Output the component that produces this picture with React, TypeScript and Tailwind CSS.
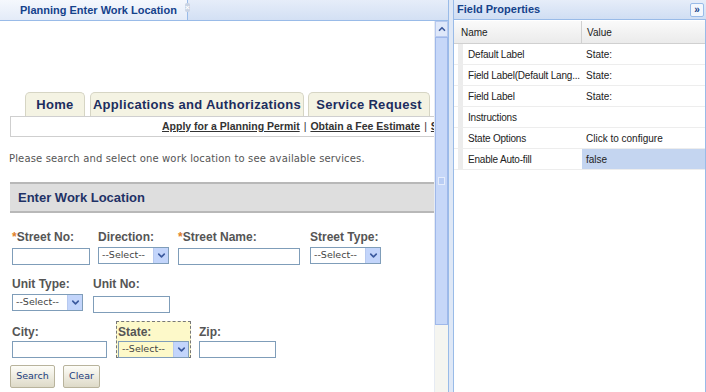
import { ChevronDown, ChevronUp } from 'lucide-react';

const label = 'text-[12px] font-bold text-[#555] leading-none';
const field = 'h-[17px] border border-[#7f9db9] bg-white';
const tab =
    'h-[24px] rounded-t-[5px] border border-b-0 border-[#d6d5c4] bg-[#f4f3e3] flex items-center justify-center text-[13px] font-bold text-[#1c2d5e] tracking-[0.3px] whitespace-nowrap';

function Select({ w, bg = 'bg-white' }: { w: string; bg?: string }) {
    return (
        <div className={`${w} h-[17px] border border-[#7f9db9] ${bg} flex items-center justify-between`}>
            <span className="pl-[3px] text-[9.5px] text-[#444] font-['DejaVu_Sans',sans-serif]">--Select--</span>
            <span className="w-[15px] h-[15px] bg-[#c3d5fb] border-l border-[#b7c9ef] flex items-center justify-center">
                <ChevronDown size={11} strokeWidth={3.5} className="text-[#3c5a9e]" />
            </span>
        </div>
    );
}

const props = [
    ['Default Label', 'State:'],
    ['Field Label(Default Lang...', 'State:'],
    ['Field Label', 'State:'],
    ['Instructions', ''],
    ['State Options', 'Click to configure'],
    ['Enable Auto-fill', 'false'],
];

export default function App() {
    return (
        <div className="w-[706px] h-[392px] flex overflow-hidden bg-white font-['Liberation_Sans',Arial,sans-serif]">
            {/* left pane */}
            <div className="w-[448px] flex flex-col shrink-0">
                <div className="h-[21px] flex bg-gradient-to-b from-[#e6edf9] to-[#d3e0f4] border-b border-[#99bbe8]">
                    <div className="w-[188px] h-[20px] flex items-center bg-gradient-to-b from-[#f5f8fd] to-[#e3ebf8] border-r border-[#99bbe8] whitespace-nowrap">
                        <span className="pl-[20px] text-[11px] font-bold text-[#15428b]">Planning Enter Work Location</span>
                        <span className="ml-[8px] mb-[6px] w-[9px] h-[9px] rounded-[2px] bg-[#c9d3e3] text-white text-[8px] leading-[9px] text-center font-bold">×</span>
                    </div>
                </div>
                <div className="flex flex-1 min-h-0">
                    <div className="w-[434px] flex flex-col overflow-hidden">
                        <div className="h-[71px] shrink-0" />
                        <div className="flex items-end h-[24px] pl-[25px] gap-[5px] shrink-0">
                            <div className={`${tab} w-[60px]`}>Home</div>
                            <div className={`${tab} w-[214px]`}>Applications and Authorizations</div>
                            <div className={`${tab} w-[122px] ml-[-1px]`}>Service Request</div>
                        </div>
                        <div className="ml-[10px] h-[21px] shrink-0 border border-r-0 border-[#cfcfcf] flex items-center overflow-hidden whitespace-nowrap pl-[151px] text-[10.5px] font-bold text-[#333]">
                            <span className="underline">Apply for a Planning Permit</span>
                            <span className="px-[4px] font-normal">|</span>
                            <span className="underline">Obtain a Fee Estimate</span>
                            <span className="px-[4px] font-normal">|</span>
                            <span className="underline">Schedule</span>
                        </div>
                        <div className="mt-[14px] pl-[9px] text-[10px] text-[#555] font-['DejaVu_Sans',sans-serif] tracking-[0.15px] whitespace-nowrap">
                            Please search and select one work location to see available services.
                        </div>
                        <div className="mt-[16px] ml-[10px] h-[31px] shrink-0 bg-[#dedede] border-t-2 border-b-2 border-[#b8b8b8] flex items-center pl-[8px] text-[13px] font-bold text-[#1f3266]">
                            Enter Work Location
                        </div>
                        {/* row 1 */}
                        <div className="mt-[18px] flex pl-[12px]">
                            <div className="w-[86px] flex flex-col gap-[5px]">
                                <span className={label}><span className="text-[#e0802a]">*</span>Street No:</span>
                                <div className={`${field} w-[78px]`} />
                            </div>
                            <div className="w-[80px] flex flex-col gap-[4px]">
                                <span className={label}>Direction:</span>
                                <Select w="w-[71px]" />
                            </div>
                            <div className="w-[132px] flex flex-col gap-[5px]">
                                <span className={label}><span className="text-[#e0802a]">*</span>Street Name:</span>
                                <div className={`${field} w-[122px]`} />
                            </div>
                            <div className="flex flex-col gap-[4px]">
                                <span className={label}>Street Type:</span>
                                <Select w="w-[71px]" />
                            </div>
                        </div>
                        {/* row 2 */}
                        <div className="mt-[13px] flex pl-[12px]">
                            <div className="w-[81px] flex flex-col gap-[4px]">
                                <span className={label}>Unit Type:</span>
                                <Select w="w-[71px]" />
                            </div>
                            <div className="flex flex-col gap-[6px]">
                                <span className={label}>Unit No:</span>
                                <div className={`${field} w-[77px]`} />
                            </div>
                        </div>
                        {/* row 3 */}
                        <div className="mt-[8px] flex pl-[12px] items-start">
                            <div className="w-[104px] flex flex-col gap-[3px] pt-[5px]">
                                <span className={label}>City:</span>
                                <div className={`${field} w-[95px]`} />
                            </div>
                            <div className="w-[75px] h-[37px] border border-dashed border-[#777] bg-[#fdf9c9] flex flex-col gap-[3px] pt-[4px] pl-[1px]">
                                <span className={label}>State:</span>
                                <Select w="w-[71px]" bg="bg-[#fdf9c9]" />
                            </div>
                            <div className="ml-[8px] flex flex-col gap-[3px] pt-[5px]">
                                <span className={label}>Zip:</span>
                                <div className={`${field} w-[77px]`} />
                            </div>
                        </div>
                        <div className="mt-[7px] flex pl-[10px] gap-[8px]">
                            <button className="w-[45px] h-[23px] rounded-[2px] border border-[#b8b39c] bg-gradient-to-b from-[#fdfdf8] to-[#dedac8] text-[9.5px] text-[#1b3b7c] font-['DejaVu_Sans',sans-serif]">Search</button>
                            <button className="w-[37px] h-[23px] rounded-[2px] border border-[#b8b39c] bg-gradient-to-b from-[#fdfdf8] to-[#dedac8] text-[9.5px] text-[#1b3b7c] font-['DejaVu_Sans',sans-serif]">Clear</button>
                        </div>
                    </div>
                    {/* scrollbar */}
                    <div className="w-[14px] flex flex-col border-l border-[#e6ebf3]">
                        <div className="h-[16px] bg-[#dfe8fa] border border-[#b7c9ef] flex items-center justify-center">
                            <ChevronUp size={10} strokeWidth={4} className="text-[#3c5a9e]" />
                        </div>
                        <div className="h-[288px] bg-[#c6d7f8] border border-[#9fb8ea] flex items-center justify-center">
                            <div className="w-[7px] h-[8px] border border-[#e4ecfc] bg-[#b9cdf4]" />
                        </div>
                        <div className="flex-1 bg-[#f5f5f0]" />
                    </div>
                </div>
            </div>
            {/* splitter */}
            <div className="w-[6px] shrink-0 bg-[#dfe8f6] border-l border-r border-[#99bbe8]" />
            {/* right pane */}
            <div className="flex-1 flex flex-col">
                <div className="h-[20px] flex items-center justify-between bg-gradient-to-b from-[#e6edf9] to-[#d0def3] border-b border-[#99bbe8] pl-[3px] pr-[2px]">
                    <span className="text-[11px] font-bold text-[#15428b]">Field Properties</span>
                    <span className="w-[14px] h-[14px] rounded-[2px] border border-[#99bbe8] bg-[#f3f7fd] text-[10px] leading-[11px] font-bold text-[#15428b] text-center">»</span>
                </div>
                <div className="flex-1 border-r border-[#99bbe8] text-[10px] text-[#222]">
                    <div className="mt-[1px] h-[23px] flex bg-gradient-to-b from-[#fafafa] to-[#ebebeb] border-b border-[#d0d0d0]">
                        <div className="w-[128px] border-r border-[#d0d0d0] flex items-center pl-[7px]">Name</div>
                        <div className="flex items-center pl-[5px]">Value</div>
                    </div>
                    {props.map(([n, v], i) => (
                        <div key={i} className="h-[21px] flex border-b border-[#ededed]">
                            <div className="w-[128px] flex items-center pl-[4px] overflow-hidden">
                                <div className="w-[5px] h-full shrink-0 bg-[#ececec]" />
                                <span className="pl-[5px] whitespace-nowrap tracking-[-0.2px]">{n}</span>
                            </div>
                            <div className={`flex-1 flex items-center pl-[4px] ${i === 5 ? 'bg-[#c4d5f0]' : ''}`}>{v}</div>
                        </div>
                    ))}
                </div>
            </div>
        </div>
    );
}
